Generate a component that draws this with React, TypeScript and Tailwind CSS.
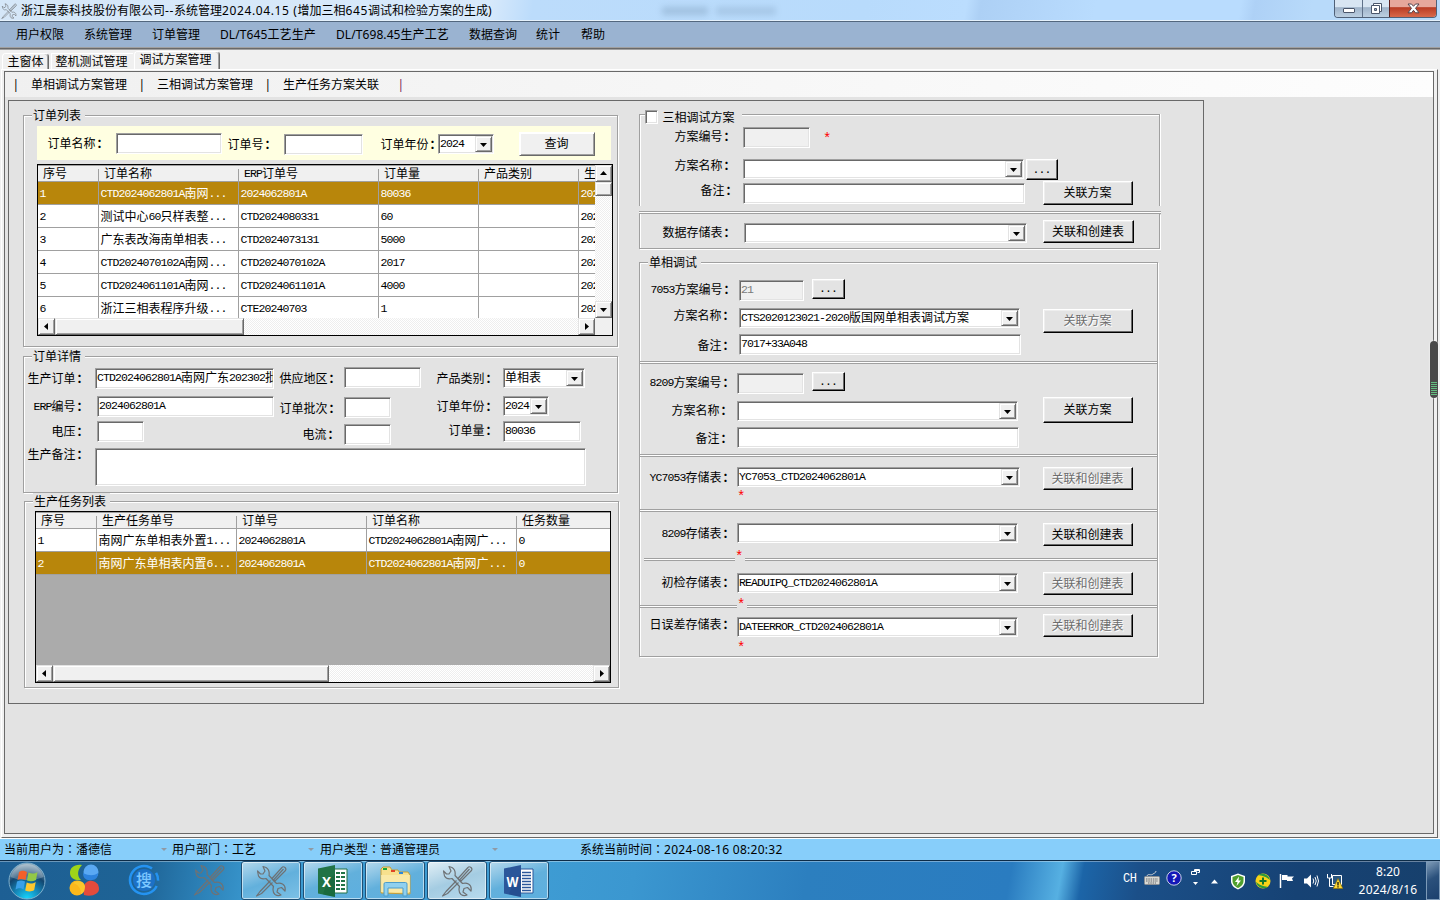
import React from "react";

type Box = { c?: string; children?: React.ReactNode };

/* Bitmap-style text: half-width Latin cells of 6px, full-width CJK cells of 12px. */
function T({ s }: { s: string }) {
  const runs = s.match(/[\x20-\x7e]+|：|[^\x20-\x7e：]+/g) ?? [];
  return (
    <>
      {runs.map((r, i) =>
        r.charCodeAt(0) < 127 ? (
          <span
            key={i}
            className="inline-block -translate-y-px font-['Liberation_Mono',monospace] text-[11.5px] leading-none tracking-[-0.9px] whitespace-pre"
          >
            {r}
          </span>
        ) : r === "：" ? (
          <span key={i} className="ml-px font-bold">
            {r}
          </span>
        ) : (
          <span key={i}>{r}</span>
        )
      )}
    </>
  );
}

/* Smooth UI text with slightly wider Latin letters and a centred full-width colon. */
function U({ s, wide = false }: { s: string; wide?: boolean }) {
  const runs = s.match(/[\x20-\x7e]+|：|[^\x20-\x7e：]+/g) ?? [];
  return (
    <>
      {runs.map((r, i) => (
        <span
          key={i}
          className={
            r === "："
              ? "font-['Noto_Sans_CJK_TC',sans-serif]"
              : r.charCodeAt(0) < 127
                ? wide
                  ? "tracking-[0.62px]"
                  : "tracking-[0.27px]"
                : ""
          }
        >
          {r}
        </span>
      ))}
    </>
  );
}

function Label({ c = "", s }: { c?: string; s: string }) {
  return (
    <div className={`h-5 shrink-0 whitespace-nowrap ${c}`}>
      <div className="-ml-[0.5px] leading-[22px]">
        <T s={s} />
      </div>
    </div>
  );
}

const SUNK =
  "shrink-0 overflow-hidden whitespace-nowrap border border-t-[#a0a0a0] border-l-[#a0a0a0] border-r-white border-b-white shadow-[inset_1px_1px_0_#696969,inset_-1px_-1px_0_#e3e3e3]";

function Input({ c = "", s = "", off = false }: { c?: string; s?: string; off?: boolean }) {
  return (
    <div className={`${SUNK} pl-px leading-[17px] ${off ? "bg-[#f0f0f0] text-[#7a7a7a]" : "bg-white"} ${c}`}>
      <T s={s} />
    </div>
  );
}

function Arrow({ d = "down" }: { d?: "down" | "up" | "left" | "right" }) {
  const pts = { down: "0,2 7,2 3.5,6", up: "0,5 7,5 3.5,1", left: "5,0 5,7 1,3.5", right: "2,0 2,7 6,3.5" }[d];
  return (
    <svg width="7" height="7" viewBox="0 0 7 7" className="block">
      <polygon points={pts} fill="#000" />
    </svg>
  );
}

const RAISED =
  "flex shrink-0 items-center justify-center bg-[#f0f0f0] border border-t-[#e3e3e3] border-l-[#e3e3e3] border-r-[#696969] border-b-[#696969] shadow-[inset_1px_1px_0_#fff,inset_-1px_-1px_0_#a0a0a0]";

function Select({ c = "", s = "" }: { c?: string; s?: string }) {
  return (
    <div className={`${SUNK} relative flex h-5 items-start justify-between bg-white pt-px pr-px pl-px ${c}`}>
      <div className="leading-[16px]">
        <T s={s} />
      </div>
      <div className={`${RAISED} h-4 w-[17px]`}>
        <Arrow />
      </div>
    </div>
  );
}

function Button({ c = "", s, off = false }: { c?: string; s: string; off?: boolean }) {
  return (
    <div
      className={`flex shrink-0 items-center justify-center border border-t-white border-l-white border-r-black border-b-black bg-[#e3e3e3] whitespace-nowrap shadow-[inset_-1px_-1px_0_#696969,inset_1px_1px_0_#eeeeee] ${off ? "text-[#6d6d6d] [text-shadow:1px_1px_0_#fff]" : ""} ${c}`}
    >
      <div className="-ml-px">
        <T s={s} />
      </div>
    </div>
  );
}

function Group({ c = "", title, children }: Box & { title: string }) {
  return (
    <div className={`relative border border-[#a0a0a0] shadow-[1px_1px_0_#fff,inset_1px_1px_0_#fff] ${c}`}>
      <div className="absolute -top-[9px] left-2 h-[18px] bg-[#e3e3e3] pr-1 pl-px leading-[18px]">
        <T s={title} />
      </div>
      {children}
    </div>
  );
}

function Row({ c = "", children }: Box) {
  return <div className={`flex items-start ${c}`}>{children}</div>;
}

function Star({ c = "" }: { c?: string }) {
  return <div className={`h-5 w-2 font-['Liberation_Mono',monospace] text-[14px] leading-[24px] text-[#f00] ${c}`}>*</div>;
}

function Divider({ a, b, c = "" }: { a: string; b?: string; c?: string }) {
  const bar = "h-[3px] border-y border-[#a0a0a0] bg-white";
  return (
    <div className={`flex justify-between ${c}`}>
      <div className={`${bar} ${a}`} />
      {b ? <div className={`${bar} ${b}`} /> : null}
    </div>
  );
}

const DITHER = "bg-[repeating-conic-gradient(#ffffff_0_25%,#eeeeee_0_50%)] bg-[length:2px_2px]";

function Grid({ cols, head, rows, sel }: { cols: string[]; head: string[]; rows: string[][]; sel: number }) {
  return (
    <>
      <div className="flex h-[17px] border-t border-b border-[#a0a0a0] bg-[#f0f0f0]">
        {head.map((h, i) => (
          <div key={i} className={`flex shrink-0 items-end ${cols[i]}`}>
            <div className="grow pl-[5px] leading-[14px] whitespace-nowrap">
              <T s={h} />
            </div>
            {i < head.length - 1 ? <div className="h-3 w-px bg-[#a0a0a0]" /> : null}
          </div>
        ))}
      </div>
      {rows.map((r, k) => (
        <div
          key={k}
          className={`flex h-[23px] border-b border-[#a0a0a0] ${k === sel ? "bg-[#b8860b] text-white" : "bg-white"}`}
        >
          {r.map((v, i) => (
            <div
              key={i}
              className={`shrink-0 border-[#a0a0a0] pl-[1.5px] leading-[23px] whitespace-nowrap ${i < r.length - 1 ? "border-r" : ""} ${cols[i]}`}
            >
              <T s={v} />
            </div>
          ))}
        </div>
      ))}
    </>
  );
}

const COLS1 = ["w-[61px]", "w-[140px]", "w-[140px]", "w-[100px]", "w-[100px]", "w-[16px]"];
const COLS2 = ["w-[61px]", "w-[140px]", "w-[130px]", "w-[150px]", "w-[93px]"];

function Orders() {
  return (
    <Group c="mt-[14px] h-[232px] w-[595px]" title="订单列表">
      <Row c="mt-[10px] ml-[13px] h-[34px] w-[574px] bg-[#ffffe1]">
        <Label c="mt-[7px] ml-[11px] w-[68px]" s="订单名称：" />
        <Input c="mt-[7px] h-[21px] w-[106px]" />
        <Label c="mt-2 ml-[6px] w-[56px]" s="订单号：" />
        <Input c="mt-2 h-[21px] w-[79px]" />
        <Label c="mt-2 ml-[18px] w-[57px]" s="订单年份：" />
        <Select c="mt-2 w-[56px]" s="2024" />
        <div className={`${RAISED} mt-[6px] ml-[25px] h-6 w-[76px] border-t-white border-l-white pr-px`}>查询</div>
      </Row>
      <div className="mt-1 ml-[13px] h-[172px] w-[576px] border border-black bg-[#f0f0f0]">
        <div className="flex h-[153px]">
          <div className="h-full w-[557px] overflow-hidden">
            <Grid
              cols={COLS1}
              sel={0}
              head={["序号", "订单名称", "ERP订单号", "订单量", "产品类别", "生"]}
              rows={[
                ["1", "CTD2024062801A南网...", "2024062801A", "80036", "", "2024"],
                ["2", "测试中心60只样表整...", "CTD2024080331", "60", "", "2024"],
                ["3", "广东表改海南单相表...", "CTD2024073131", "5000", "", "2024"],
                ["4", "CTD2024070102A南网...", "CTD2024070102A", "2017", "", "2024"],
                ["5", "CTD2024061101A南网...", "CTD2024061101A", "4000", "", "2024"],
                ["6", "浙江三相表程序升级...", "CTE20240703", "1", "", "2024"],
              ]}
            />
          </div>
          <div className={`flex w-[17px] flex-col ${DITHER}`}>
            <div className={`${RAISED} h-[17px]`}>
              <Arrow d="up" />
            </div>
            <div className={`${RAISED} h-[14px]`} />
            <div className="grow" />
            <div className={`${RAISED} h-[17px]`}>
              <Arrow d="down" />
            </div>
          </div>
        </div>
        <div className="flex h-[17px]">
          <div className={`flex w-[557px] ${DITHER}`}>
            <div className={`${RAISED} w-[17px]`}>
              <Arrow d="left" />
            </div>
            <div className={`${RAISED} w-[189px]`} />
            <div className="grow" />
            <div className={`${RAISED} w-[17px]`}>
              <Arrow d="right" />
            </div>
          </div>
        </div>
      </div>
    </Group>
  );
}

function Details() {
  return (
    <Group c="mt-[9px] h-[137px] w-[595px]" title="订单详情">
      <Row c="mt-[9px] h-7">
        <Label c="mt-[2px] ml-1 w-[67px]" s="生产订单：" />
        <Input c="mt-[2px] h-[21px] w-[179px]" s="CTD2024062801A南网广东202302批" />
        <Label c="mt-[2px] ml-[6px] w-[64px]" s="供应地区：" />
        <Input c="mt-px h-[21px] w-[77px]" />
        <Label c="mt-[2px] ml-4 w-[66px]" s="产品类别：" />
        <Select c="mt-[2px] w-[82px]" s="单相表" />
      </Row>
      <Row c="h-[25px]">
        <Label c="mt-[2px] ml-[10px] w-[63px]" s="ERP编号：" />
        <Input c="mt-[2px] h-[21px] w-[177px]" s="2024062801A" />
        <Label c="mt-1 ml-[6px] w-[64px]" s="订单批次：" />
        <Input c="mt-[3px] h-[21px] w-[47px]" />
        <Label c="mt-[2px] ml-[46px] w-[66px]" s="订单年份：" />
        <Select c="mt-[2px] w-[46px]" s="2024" />
      </Row>
      <Row c="h-[25px]">
        <Label c="mt-[2px] ml-7 w-[45px]" s="电压：" />
        <Input c="mt-[2px] h-[21px] w-[47px]" />
        <Label c="mt-[5px] ml-[159px] w-[41px]" s="电流：" />
        <Input c="mt-[5px] h-[21px] w-[47px]" />
        <Label c="mt-px ml-[58px] w-[54px]" s="订单量：" />
        <Input c="mt-[2px] h-[21px] w-[78px]" s="80036" />
      </Row>
      <Row>
        <Label c="ml-1 w-[67px]" s="生产备注：" />
        <Input c="mt-1 h-[38px] w-[491px]" />
      </Row>
    </Group>
  );
}

function Tasks() {
  return (
    <Group c="mt-2 ml-px h-[187px] w-[595px]" title="生产任务列表">
      <div className="mt-[9px] ml-[10px] flex h-[172px] w-[576px] flex-col border border-black bg-[#ababab]">
        <Grid
          cols={COLS2}
          sel={1}
          head={["序号", "生产任务单号", "订单号", "订单名称", "任务数量"]}
          rows={[
            ["1", "南网广东单相表外置1...", "2024062801A", "CTD2024062801A南网广...", "0"],
            ["2", "南网广东单相表内置6...", "2024062801A", "CTD2024062801A南网广...", "0"],
          ]}
        />
        <div className={`mt-auto flex h-[17px] ${DITHER}`}>
          <div className={`${RAISED} w-[17px]`}>
            <Arrow d="left" />
          </div>
          <div className={`${RAISED} w-[276px]`} />
          <div className="grow" />
          <div className={`${RAISED} w-[17px]`}>
            <Arrow d="right" />
          </div>
        </div>
      </div>
    </Group>
  );
}

function ThreePhase() {
  return (
    <>
      <div className="relative mt-[13px] h-[92px] w-[521px] border border-b-0 border-[#a0a0a0] pt-[11px] shadow-[1px_0_0_#fff,inset_1px_1px_0_#fff]">
        <div className="absolute -top-[7px] left-[5px] flex h-5 items-center bg-[#e3e3e3] pr-[7px]">
          <div className={`${SUNK} -mt-[2px] h-[14px] w-[13px] bg-white`} />
          <Label c="-mt-[3px] ml-[5px]" s="三相调试方案" />
        </div>
        <Row c="h-[29px]">
          <Label c="ml-[35px] w-[68px]" s="方案编号：" />
          <Input off c="mt-px h-[21px] w-[67px]" />
          <Star c="mt-px ml-[13px]" />
        </Row>
        <Row c="h-[25px]">
          <Label c="ml-[35px] w-[68px]" s="方案名称：" />
          <Select c="mt-1 w-[281px]" />
          <Button c="mt-1 ml-[2px] h-[21px] w-8" s="..." />
        </Row>
        <Row>
          <Label c="ml-[61px] w-[42px]" s="备注：" />
          <Input c="mt-[3px] h-[21px] w-[282px]" />
          <Button c="mt-px ml-[18px] h-6 w-[90px]" s="关联方案" />
        </Row>
      </div>
      <Divider c="mt-[5px] w-[522px]" a="w-full" />
      <div className="h-[35px] w-[521px] border border-t-0 border-[#a0a0a0] shadow-[1px_1px_0_#fff,inset_1px_0_0_#fff]">
        <Row>
          <Label c="mt-2 ml-[23px] w-[81px]" s="数据存储表：" />
          <Select c="mt-[9px] w-[283px]" />
          <Button c="mt-[6px] ml-4 h-[23px] w-[91px]" s="关联和创建表" />
        </Row>
      </div>
    </>
  );
}

function SinglePhase() {
  return (
    <Group c="mt-[13px] h-[395px] w-[519px]" title="单相调试">
      <div className="h-[98px] pt-4">
        <Row c="h-[26px]">
          <Label c="ml-[11px] w-[88px]" s="7053方案编号：" />
          <Input off c="mt-px h-[21px] w-[65px]" s="21" />
          <Button c="ml-2 h-5 w-[33px]" s="..." />
        </Row>
        <Row c="h-[29px]">
          <Label c="ml-[34px] w-[65px]" s="方案名称：" />
          <Select c="mt-[3px] w-[281px]" s="CTS2020123021-2020版国网单相表调试方案" />
          <Button off c="mt-1 ml-[23px] h-6 w-[90px]" s="关联方案" />
        </Row>
        <Row>
          <Label c="mt-px ml-[58px] w-[41px]" s="备注：" />
          <Input c="h-[21px] w-[282px]" s="7017+33A048" />
        </Row>
      </div>
      <Divider a="w-full" />
      <div className="h-[90px] pt-2">
        <Row c="h-[26px]">
          <Label c="ml-[10px] w-[87px]" s="8209方案编号：" />
          <Input off c="mt-px h-[21px] w-[67px]" />
          <Button c="ml-2 h-[19px] w-[33px]" s="..." />
        </Row>
        <Row c="h-[29px]">
          <Label c="mt-[2px] ml-8 w-[65px]" s="方案名称：" />
          <Select c="mt-[3px] w-[281px]" />
          <Button c="-mt-px ml-[25px] h-[26px] w-[90px]" s="关联方案" />
        </Row>
        <Row>
          <Label c="mt-px ml-[56px] w-[41px]" s="备注：" />
          <Input c="h-[21px] w-[282px]" />
        </Row>
      </div>
      <Divider a="w-full" />
      <div className="h-[52px] pt-[10px]">
        <Row c="h-[18px]">
          <Label c="ml-[10px] w-[87px]" s="YC7053存储表：" />
          <Select c="w-[283px]" s="YC7053_CTD2024062801A" />
          <Button off c="ml-[23px] h-[23px] w-[90px]" s="关联和创建表" />
        </Row>
        <Star c="ml-[97px]" />
      </div>
      <Divider a="w-full" />
      <div className="h-[46px] pt-[11px]">
        <Row c="h-[22px]">
          <Label c="ml-[22px] w-[75px]" s="8209存储表：" />
          <Select c="w-[281px]" />
          <Button c="ml-[25px] h-[23px] w-[90px]" s="关联和创建表" />
        </Row>
        <Star c="ml-[95px]" />
      </div>
      <Divider c="ml-1" a="w-[91px]" b="w-[412px]" />
      <div className="h-[44px] pt-[11px]">
        <Row c="h-[21px]">
          <Label c="ml-[22px] w-[75px]" s="初检存储表：" />
          <Select c="mt-px w-[281px]" s="READUIPQ_CTD2024062801A" />
          <Button off c="ml-[25px] h-[23px] w-[90px]" s="关联和创建表" />
        </Row>
        <Star c="ml-[97px]" />
      </div>
      <Divider a="w-[97px]" b="w-[410px]" />
      <div className="h-[48px] pt-[6px]">
        <Row c="h-[22px]">
          <Label c="ml-[10px] w-[87px]" s="日误差存储表：" />
          <Select c="mt-[3px] w-[281px]" s="DATEERROR_CTD2024062801A" />
          <Button off c="ml-[25px] h-[23px] w-[90px]" s="关联和创建表" />
        </Row>
        <Star c="ml-[97px]" />
      </div>
    </Group>
  );
}

function Tools({ c = "", size = 32 }: { c?: string; size?: number }) {
  return (
    <svg width={size} height={size} viewBox="0 0 32 32" className={c} fill="none" stroke="#6e7275" strokeWidth="1.2" strokeLinejoin="round">
      <path d="M2.500 6 3.500 11Q6 15 11 13.500L18.500 21.500Q17 27 20 29.500 23 31.500 26 30L22 27 23 23.500 26.500 22.500 30 26Q31 21 27.500 19 25 17.500 21.500 18.500L14 10.500Q15 5 11 2.500L8 1.500 10 6 8 9 5.500 9z" />
      <path d="M17 13.500 27 2.500Q28 1 30 2.500 31.500 4 30.500 5.500L19.500 16.500z" />
      <path d="M28.500 4 18.500 15M15.500 15.500 5 26.500 1.500 31 6.500 28.500 17.500 17.500" />
    </svg>
  );
}

function TitleBar() {
  return (
    <div className="flex h-[22px] shrink-0 justify-between border-b border-[#53677e] bg-[linear-gradient(100deg,#d5e7f8_0%,#d7e9fb_34%,#bcdcfb_37%,#b8dbfc_60%,#bbddfe_67%,#add0f5_68%,#b9dcfe_76%,#b9dcfe_86%,#aed1f6_87%,#b8dafa_91%)] shadow-[inset_0_-1px_0_#e6f2fc]">
      <div className="flex items-center">
        <div className="w-5 pl-px">
          <Tools size={16} />
        </div>
        <div className="ml-px w-[473px] leading-[21px] whitespace-nowrap">
          <U wide s="浙江晨泰科技股份有限公司--系统管理2024.04.15 (增加三相645调试和检验方案的生成)" />
        </div>
        <div className="ml-[168px] h-2 w-[46px] bg-[#7897b5] opacity-40 blur-[3px]" />
        <div className="ml-2 h-2 w-[60px] bg-[#7897b5] opacity-30 blur-[3px]" />
      </div>
      <div className="mr-[3px] flex h-[18px] overflow-hidden rounded-b border border-t-0 border-[#4f6077]">
        <div className="flex w-[27px] items-center justify-center bg-[linear-gradient(#d8e5f2_0_40%,#9fb3c9_45%,#bccfe1)]">
          <div className="mt-[3px] h-[5px] w-3 rounded-[1px] border border-[#4b566b] bg-white" />
        </div>
        <div className="flex w-[27px] items-center justify-center border-l border-[#5f7189] bg-[linear-gradient(#d8e5f2_0_40%,#9fb3c9_45%,#bccfe1)]">
          <svg width="13" height="13" viewBox="0 0 13 13" fill="#fff" stroke="#4b566b">
            <path d="M3.500 1.500h8v8h-8z" />
            <path d="M1.500 3.500h8v8h-8z" />
            <path d="M4.500 6.500h2v2h-2z" fill="#9fb3c9" />
          </svg>
        </div>
        <div className="flex w-[47px] items-center justify-center border-l border-[#5c1d1a] bg-[linear-gradient(#e6a79b_0_40%,#b93c24_45%,#d8694c)]">
          <svg width="13" height="11" viewBox="0 0 13 11" stroke="#54454f" fill="#fff" strokeWidth="1">
            <path d="M1 1h3.500l2 2.300 2-2.300H12L8.500 5.300 12 9.800H8.500l-2-2.500-2 2.500H1l3.500-4.500z" />
          </svg>
        </div>
      </div>
    </div>
  );
}

const TASK =
  "flex h-[39px] w-[60px] shrink-0 items-center justify-center rounded-[3px] border border-[#1e4f75] shadow-[inset_0_0_0_1px_rgba(255,255,255,0.55)]";

function OfficeIcon({ letter, main, dark }: { letter: string; main: string; dark: string }) {
  return (
    <svg width="32" height="32" viewBox="0 0 32 32">
      <path d="M17 4h13v24H17z" fill="#fff" stroke={main} />
      {letter === "X" ? (
        <path
          d="M19 7h4v2h-4zm5 0h4v2h-4zM19 11h4v2h-4zm5 0h4v2h-4zM19 15h4v2h-4zm5 0h4v2h-4zM19 19h4v2h-4zm5 0h4v2h-4zM19 23h4v2h-4zm5 0h4v2h-4z"
          fill={main}
        />
      ) : (
        <path d="M19 7.500h9M19 10.500h9M19 13.500h9M19 16.500h9M19 19.500h9M19 22.500h9M19 25.500h9" stroke={main} strokeWidth="1.300" />
      )}
      <path d="M1 3.500 18 0v32L1 28.500z" fill={main} />
      <path d="M10 17 18 9v23L6 29.500z" fill={dark} opacity=".35" />
      <text
        x="9.500"
        y="21.500"
        textAnchor="middle"
        fontSize="15"
        fontWeight="700"
        fontFamily="Open Sans, sans-serif"
        fill="#fff"
        textLength={letter === "W" ? 12 : 9}
        lengthAdjust="spacingAndGlyphs"
      >
        {letter}
      </text>
    </svg>
  );
}

function TaskBar() {
  return (
    <div className="flex h-10 shrink-0 items-start border-t border-[#0d2c48] bg-[linear-gradient(100deg,#1d5f94_0%,#1e6395_10%,#2b7fb5_14%,#3a99d0_18%,#3f9dd4_36%,#3b97d0_44%,#2c7fbf_56%,#2a7cc0_70%,#56b0e2_73.500%,#1c65a8_75%,#1b4f88_79%,#164274_90%,#17406c_100%)] shadow-[inset_0_1px_0_rgba(255,255,255,0.35)]">
      <div className="flex w-[52px] justify-end pt-px">
        <svg width="44" height="38" viewBox="0 0 44 38">
          <defs>
            <radialGradient id="orb" cx=".5" cy="1" r=".95">
              <stop offset="0" stopColor="#16d8ff" />
              <stop offset=".4" stopColor="#1583b5" />
              <stop offset=".7" stopColor="#12456e" />
              <stop offset="1" stopColor="#8fa9bb" />
            </radialGradient>
          </defs>
          <circle cx="19" cy="19" r="18" fill="url(#orb)" stroke="#7fb0cc" />
          <path d="M2.500 15a17 17 0 0 1 33 0c-8 4-25 4-33 0z" fill="#fff" opacity=".25" />
          <path d="M11 10c3-2 5-1.500 8 0l-1.500 8c-3-1.500-5-1.500-8 0z" fill="#f2602a" />
          <path d="M20.500 10.500c3 1.500 6 1.500 9-.5l-1.500 8c-3 1.500-6 1.500-9 .5z" fill="#93c847" />
          <path d="M9 19.500c3-1.500 5-1.500 8 0l-1.500 8c-3-2-5-1.500-8 0z" fill="#39a0e8" />
          <path d="M18.700 20.500c3 1.500 6 1.500 9-.5l-1.500 8c-3 2-6 1.500-9 .5z" fill="#fdc82f" />
        </svg>
      </div>
      <svg width="32" height="32" viewBox="0 0 32 32" className="mt-[3px] ml-4">
        <path d="M14 1C6 0 2 4 2 9s5 8 11 7c-4-4-4-10 1-15z" fill="#9ed519" />
        <circle cx="23" cy="8" r="7.500" fill="#5aa9f3" />
        <path d="M15 9c0 5 3 8 9 7 4 0 6-3 6-7-4 3-9 3-15 0z" fill="#2d83dd" />
        <circle cx="9" cy="24" r="7.500" fill="#fcb81c" />
        <path d="M16 31c-1-6-1-12 5-14 6-1 10 3 10 8s-7 8-15 6z" fill="#e44b3c" />
        <path d="M5 19c6-3 11-2 12 3 0 4-1 7-4 8 0-5-2-9-8-11z" fill="#fbc62c" />
      </svg>
      <svg width="34" height="34" viewBox="0 0 34 34" className="mt-[3px] ml-[27px]">
        <circle cx="17" cy="16" r="14" fill="none" stroke="#2493f2" strokeWidth="2.500" strokeDasharray="68 6 8 6" transform="rotate(25 17 16)" />
        <circle cx="17" cy="16" r="11" fill="#1c71c7" />
        <text x="17" y="22" textAnchor="middle" fontSize="16" fontWeight="500" fontFamily="Noto Sans CJK SC, sans-serif" fill="#7cc7ff">
          搜
        </text>
      </svg>
      <Tools c="mt-[3px] ml-8" />
      <div className={`${TASK} ml-4 bg-[linear-gradient(160deg,#b5d9ed,#62b0dc_50%,#7cc1e6)]`}>
        <Tools />
      </div>
      <div className={`${TASK} ml-[2px] bg-[linear-gradient(160deg,#b5d9ed,#62b0dc_50%,#5dafdf)]`}>
        <OfficeIcon letter="X" main="#217346" dark="#0f5a31" />
      </div>
      <div className={`${TASK} ml-[2px] bg-[linear-gradient(160deg,#b5d9ed,#62b0dc_50%,#5dafdf)]`}>
        <svg width="34" height="32" viewBox="0 0 34 32">
          <path d="M3 28V4l2-2h7l2 3h6l1 2h9l2 3v19z" fill="#f7e08d" stroke="#c39e3c" />
          <path d="M5 3h4v2H5z" fill="#1aa637" />
          <path d="M13 5h4v2h-4z" fill="#e04426" />
          <path d="M21 7h4v2h-4z" fill="#2b88dc" />
          <path d="M3 10h29v17H3z" fill="#faebae" opacity=".8" />
          <path d="M6 31V19q0-1.500 1.500-1.500h20Q29 17.500 29 19v12h-4v-8H10v8z" fill="#8fd0ef" stroke="#4d9cc9" />
        </svg>
      </div>
      <div className={`${TASK} ml-[2px] bg-[linear-gradient(160deg,#e2eff6,#a4cce2_50%,#b8dbee)]`}>
        <Tools />
      </div>
      <div className={`${TASK} ml-[2px] bg-[linear-gradient(160deg,#b5d9ed,#62b0dc_50%,#5dafdf)]`}>
        <OfficeIcon letter="W" main="#2b579a" dark="#173f7d" />
      </div>
      <div className="ml-auto flex h-[39px] items-start text-white">
        <div className="mt-[10px] w-[21px] font-['Liberation_Mono',monospace] text-[12px] leading-4 tracking-[-0.5px]">CH</div>
        <svg width="16" height="15" viewBox="0 0 16 15" className="mt-[10px]">
          <path d="M3 5c1-3 4 0 6-2 1-1 3-1 3-3" fill="none" stroke="#c9ced3" />
          <rect x=".5" y="5.500" width="15" height="8" rx="1" fill="#d9d9d4" stroke="#8b8f94" />
          <path d="M2 8h12M2 10h12M4 12h8" stroke="#63676c" strokeDasharray="1.500 .8" />
        </svg>
        <svg width="16" height="16" viewBox="0 0 16 16" className="mt-[9px] ml-[6px]">
          <circle cx="8" cy="8" r="7.200" fill="#1418b8" stroke="#c9cfe6" />
          <text x="8" y="12" textAnchor="middle" fontSize="11" fontWeight="700" fontFamily="Open Sans, sans-serif" fill="#fff">
            ?
          </text>
        </svg>
        <svg width="10" height="18" viewBox="0 0 10 18" className="mt-[8px] ml-[9px]" fill="none" stroke="#fff">
          <path d="M3.500 2.500v-2h5v3h-2M3.500 1.500h5M.5 2.500h5v3h-5z" />
          <path d="M2 13h5l-2.500 3z" fill="#fff" stroke="none" />
        </svg>
        <svg width="8" height="5" viewBox="0 0 8 5" className="mt-[18px] ml-[10px]">
          <path d="M0 4.500h7L3.500.5z" fill="#fff" />
        </svg>
        <svg width="16" height="17" viewBox="0 0 16 17" className="mt-[12px] ml-[11px]">
          <path d="M8 .5 15 3v5c0 4-3 7-7 8.500C4 15 1 12 1 8V3z" fill="#fff" />
          <path d="M8 2 13.500 4v4c0 3.500-2.500 5.500-5.500 7-3-1.500-5.500-3.500-5.500-7V4z" fill="#4f9f2d" />
          <path d="M9 3.500 5 9h2.500L6.500 13 11 7.500H8.500z" fill="#fff" />
        </svg>
        <svg width="16" height="16" viewBox="0 0 16 16" className="mt-[12px] ml-[9px]">
          <circle cx="8" cy="8" r="7.500" fill="#f8d218" />
          <path d="M3 2c5-3 11 0 12 5-4-3-6-4-12-5zM13 14C8 17 2 14 1 9c4 3 6 4 12 5z" fill="#2d9a3a" />
          <path d="M8 4.500v7M4.500 8h7" stroke="#12762b" strokeWidth="2" />
        </svg>
        <svg width="16" height="16" viewBox="0 0 16 16" className="mt-[12px] ml-[8px]">
          <path d="M1.500 1v14" stroke="#fff" strokeWidth="1.500" />
          <path d="M3 2h5.500v1.500H15l-2 2 1 2.500H8V7H3z" fill="#fff" />
        </svg>
        <svg width="16" height="16" viewBox="0 0 16 16" className="mt-[12px] ml-[8px]">
          <path d="M1 5.500h3L8 1.500v13l-4-4H1z" fill="#fff" />
          <path d="M10 5.500q1.500 2.500 0 5M12 4q2.500 4 0 8M14 2.500q3 5.500 0 11" fill="none" stroke="#fff" />
        </svg>
        <svg width="16" height="17" viewBox="0 0 16 17" className="mt-[12px] ml-[8px]">
          <path d="M5.500 2.500h9v9h-9z" fill="#2a567f" stroke="#fff" />
          <path d="M.5 1v4h4V1M2.500 5v8.500h4" fill="none" stroke="#fff" />
          <path d="M11 5.500 15.800 15.500h-9.500z" fill="#fdd835" stroke="#8b6d00" strokeWidth=".6" />
          <path d="M11 9v3.500M11 13.300v1.200" stroke="#000" strokeWidth="1.200" />
        </svg>
        <div className="ml-[12px] w-[66px] text-center leading-[18px]">
          <div className="mt-[2px]">8:20</div>
          <div className="tracking-[0.2px]">2024/8/16</div>
        </div>
        <div className="ml-[5px] h-[39px] w-[14px] border border-[#7c9ab8] bg-[linear-gradient(150deg,#7f9cb8,#2b517c_45%,#1b406d)]" />
      </div>
    </div>
  );
}

function StatusArrow() {
  return (
    <svg width="6" height="4" viewBox="0 0 6 4" className="mt-px">
      <path d="M0 0h6L3 3z" fill="#8f9aa5" />
    </svg>
  );
}

export default function App() {
  return (
    <div className="flex h-[900px] w-[1440px] flex-col overflow-hidden bg-[#f0f0f0] font-['Noto_Sans','Noto_Sans_CJK_SC',sans-serif] text-[12px] text-black">
      <TitleBar />
      <div className="flex h-[25px] shrink-0 items-center bg-[#9ab3d1] pl-4 leading-[25px] whitespace-nowrap">
        <div className="w-[68px]">用户权限</div>
        <div className="w-[68px]">系统管理</div>
        <div className="w-[68px]">订单管理</div>
        <div className="w-[116px] tracking-[0.1px]">DL/T645工艺生产</div>
        <div className="w-[133px] tracking-[0.08px]">DL/T698.45生产工艺</div>
        <div className="w-[67px]">数据查询</div>
        <div className="w-[45px]">统计</div>
        <div>帮助</div>
      </div>
      <div className="h-[3px] shrink-0 border-t border-b border-[#a0a0a0] bg-[#696969]" />

      <div className="flex h-[19px] shrink-0 items-end whitespace-nowrap">
        <div className="ml-[2px] h-4 w-[47px] rounded-t-sm border-t border-r border-l border-t-white border-r-[#696969] border-l-white pl-[4.5px] leading-[15px] shadow-[inset_-1px_0_0_#a0a0a0]">
          主窗体
        </div>
        <div className="ml-[2px] h-4 w-[82px] border-t border-l border-white pl-[3.5px] leading-[15px]">整机测试管理</div>
        <div className="ml-px h-[18px] w-[86px] rounded-t-sm border-t border-r border-l border-t-white border-r-[#696969] border-l-white pl-[4.5px] leading-[16px] shadow-[inset_-1px_0_0_#a0a0a0]">
          调试方案管理
        </div>
      </div>

      <div className="relative ml-px h-[769px] w-[1437px] shrink-0 border border-t-white border-r-[#696969] border-b-[#696969] border-l-white pt-px pr-[3px] pb-[3px] pl-[2px]">
        <div className="h-full border border-[#696969] bg-[#e3e3e3]">
          <div className="flex h-[25px] bg-[linear-gradient(90deg,#f0f0f0,#fdfdfd)] leading-[26px] whitespace-nowrap">
            <div className="ml-[7.5px] w-[18.5px]">|</div>
            <div className="w-[107.5px]">单相调试方案管理</div>
            <div className="w-[18.5px]">|</div>
            <div className="w-[107.5px]">三相调试方案管理</div>
            <div className="w-[18.5px]">|</div>
            <div className="w-[114.5px]">生产任务方案关联</div>
            <div className="text-[#7a1a50]">|</div>
          </div>
          <div className="mt-[3px] ml-[3px] flex h-[604px] w-[1196px] border border-[#696969] pl-[14px]">
            <div className="w-[596px]">
              <Orders />
              <Details />
              <Tasks />
            </div>
            <div className="ml-5">
              <ThreePhase />
              <SinglePhase />
            </div>
          </div>
        </div>
        <div className="absolute top-[271px] left-[1428px] flex h-[57px] w-[8px] flex-col justify-end rounded-full bg-[#4a4a4a] px-px pb-[3px] shadow-[0_0_2px_#fff]">
          <div className="h-[13px] bg-[repeating-linear-gradient(#63bd80_0_1px,#4a4a4a_1px_2px)]" />
        </div>
      </div>
      <div className="h-px shrink-0 bg-white" />

      <div className="flex h-[21px] shrink-0 items-start bg-[#87cefa] pl-1 leading-[19px] whitespace-nowrap">
        <div className="w-[157px]">
          <U s="当前用户为：潘德信" />
        </div>
        <div className="flex h-[21px] items-center">
          <StatusArrow />
        </div>
        <div className="ml-[5px] w-[136px]">
          <U s="用户部门：工艺" />
        </div>
        <div className="flex h-[21px] items-center">
          <StatusArrow />
        </div>
        <div className="ml-[6px] w-[172px]">
          <U s="用户类型：普通管理员" />
        </div>
        <div className="flex h-[21px] items-center">
          <StatusArrow />
        </div>
        <div className="ml-[82px]">
          <U s="系统当前时间：2024-08-16 08:20:32" />
        </div>
      </div>
      <TaskBar />
    </div>
  );
}
